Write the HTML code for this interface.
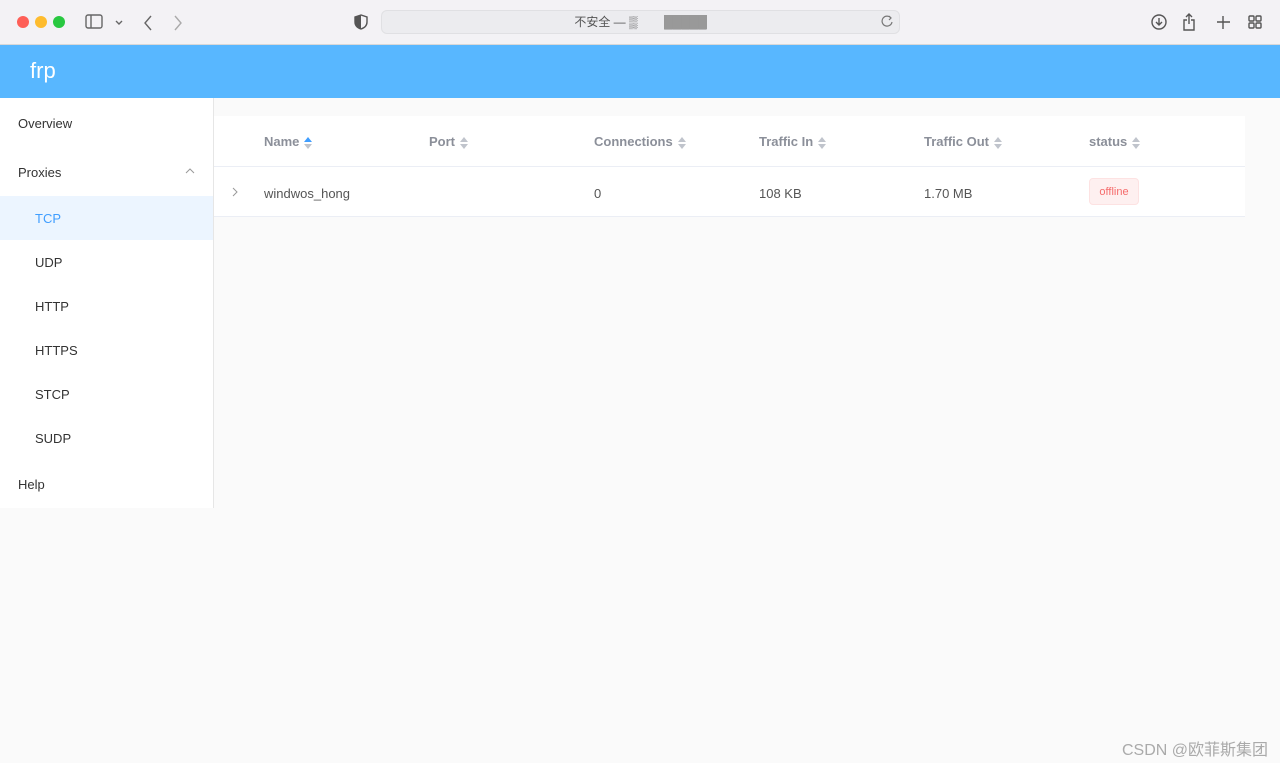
<!DOCTYPE html>
<html><head><meta charset="utf-8"><style>
*{margin:0;padding:0;box-sizing:border-box}
body{width:1280px;height:763px;overflow:hidden;background:#fafafa;font-family:"Liberation Sans","Noto Sans CJK SC",sans-serif;position:relative}
.bar{position:absolute;left:0;top:0;width:1280px;height:45px;background:#f3f2f5;border-bottom:1px solid #d8d8d8}
.dot{position:absolute;top:16px;width:12px;height:12px;border-radius:50%}
.url{position:absolute;left:381px;top:10px;width:519px;height:24px;border-radius:6px;background:#ececef;border:1px solid #e0e0e3;font-size:12px;color:#555;text-align:center;line-height:22px}
.hdr{position:absolute;left:0;top:45px;width:1280px;height:53px;background:#58b7ff}
.hdr span{position:absolute;left:30px;top:13px;color:#fff;font-size:22px}
.side{position:absolute;left:0;top:98px;width:214px;height:410px;background:#fff;border-right:1px solid #e6e6e6}
.side div{position:absolute;font-size:13px;color:#333}
.tbl{position:absolute;left:214px;top:116px;width:1031px;height:101px;background:#fff}
.th{position:absolute;top:18px;font-size:13px;font-weight:bold;color:#8b8f99}
.td{position:absolute;top:70px;font-size:13px;color:#555}
.s{display:inline-block;vertical-align:middle;margin-left:5px;width:8px;height:12px;position:relative}
.s:before,.s:after{content:"";position:absolute;left:0;border-left:4px solid transparent;border-right:4px solid transparent}
.s:before{top:0;border-bottom:5px solid #c0c4cc}
.s:after{bottom:0;border-top:5px solid #c0c4cc}
.s.a:before{border-bottom-color:#409eff}
</style></head><body>
<div class="bar">
<div class="dot" style="left:17px;background:#fe5f57"></div>
<div class="dot" style="left:35px;background:#febc2e"></div>
<div class="dot" style="left:53px;background:#28c840"></div>
<svg style="position:absolute;left:85px;top:14px" width="140" height="18" fill="none" stroke="#666" stroke-width="1.4"><rect x="1" y="1" width="16" height="13" rx="2"/><line x1="6" y1="1" x2="6" y2="14"/><path d="M31 7l3 3 3-3"/><path d="M66 2l-6 7 6 7"/><path d="M90 2l6 7-6 7" stroke="#aaa"/></svg>
<svg style="position:absolute;left:354px;top:14px" width="14" height="16"><path d="M7 1L1 3v5c0 4 3 6 6 7 3-1 6-3 6-7V3z" fill="none" stroke="#555" stroke-width="1.4"/><path d="M7 1v14c-3-1-6-3-6-7V3z" fill="#555"/></svg>
<div class="url">不安全 — ▒ &nbsp;&nbsp;&nbsp;&nbsp;&nbsp;&nbsp;&nbsp;<span style="background:#999;color:#999">█████</span></div>
<svg style="position:absolute;left:880px;top:14px" width="14" height="16" fill="none" stroke="#777" stroke-width="1.2"><path d="M11 4a5 5 0 1 0 1 4"/><path d="M9 2l2 2-2 2"/></svg>
<svg style="position:absolute;left:1150px;top:12px" width="120" height="20" fill="none" stroke="#555" stroke-width="1.4"><circle cx="9" cy="10" r="7"/><path d="M9 6v7M6 10l3 3 3-3"/><path d="M37 8h-3v10h10V8h-3M39 2v10M36 5l3-3 3 3"/><path d="M73 4v13M67 10h13"/><rect x="99" y="4" width="5" height="5" rx="1"/><rect x="106" y="4" width="5" height="5" rx="1"/><rect x="99" y="11" width="5" height="5" rx="1"/><rect x="106" y="11" width="5" height="5" rx="1"/></svg>
</div>
<div class="hdr"><span>frp</span></div>
<div class="side">
<div style="left:18px;top:18px">Overview</div>
<div style="left:18px;top:67px">Proxies</div>
<svg style="position:absolute;left:185px;top:70px" width="10" height="6" fill="none" stroke="#999"><path d="M1 5l4-4 4 4"/></svg>
<div style="left:0;top:98px;width:213px;height:44px;background:#ecf5ff"></div>
<div style="left:35px;top:113px;color:#409eff">TCP</div>
<div style="left:35px;top:157px">UDP</div>
<div style="left:35px;top:201px">HTTP</div>
<div style="left:35px;top:245px">HTTPS</div>
<div style="left:35px;top:289px">STCP</div>
<div style="left:35px;top:333px">SUDP</div>
<div style="left:18px;top:379px">Help</div>
</div>
<div class="tbl">
<div style="position:absolute;left:0;top:50px;width:1031px;height:1px;background:#ebeef5"></div>
<div style="position:absolute;left:0;top:100px;width:1031px;height:1px;background:#ebeef5"></div>
<div class="th" style="left:50px">Name<span class="s a"></span></div>
<div class="th" style="left:215px">Port<span class="s"></span></div>
<div class="th" style="left:380px">Connections<span class="s"></span></div>
<div class="th" style="left:545px">Traffic In<span class="s"></span></div>
<div class="th" style="left:710px">Traffic Out<span class="s"></span></div>
<div class="th" style="left:875px">status<span class="s"></span></div>
<svg style="position:absolute;left:18px;top:71px" width="6" height="10" fill="none" stroke="#999"><path d="M1 1l4 4-4 4"/></svg>
<div class="td" style="left:50px">windwos_hong</div>
<div class="td" style="left:380px">0</div>
<div class="td" style="left:545px">108 KB</div>
<div class="td" style="left:710px">1.70 MB</div>
<div style="position:absolute;left:875px;top:62px;width:50px;height:27px;background:#fef0f0;border:1px solid #fde2e2;border-radius:4px;color:#f56c6c;font-size:11px;text-align:center;line-height:27px">offline</div>
</div>
<div style="position:absolute;right:12px;top:736px;font-size:16px;color:#aaa">CSDN @欧菲斯集团</div>
</body></html>
